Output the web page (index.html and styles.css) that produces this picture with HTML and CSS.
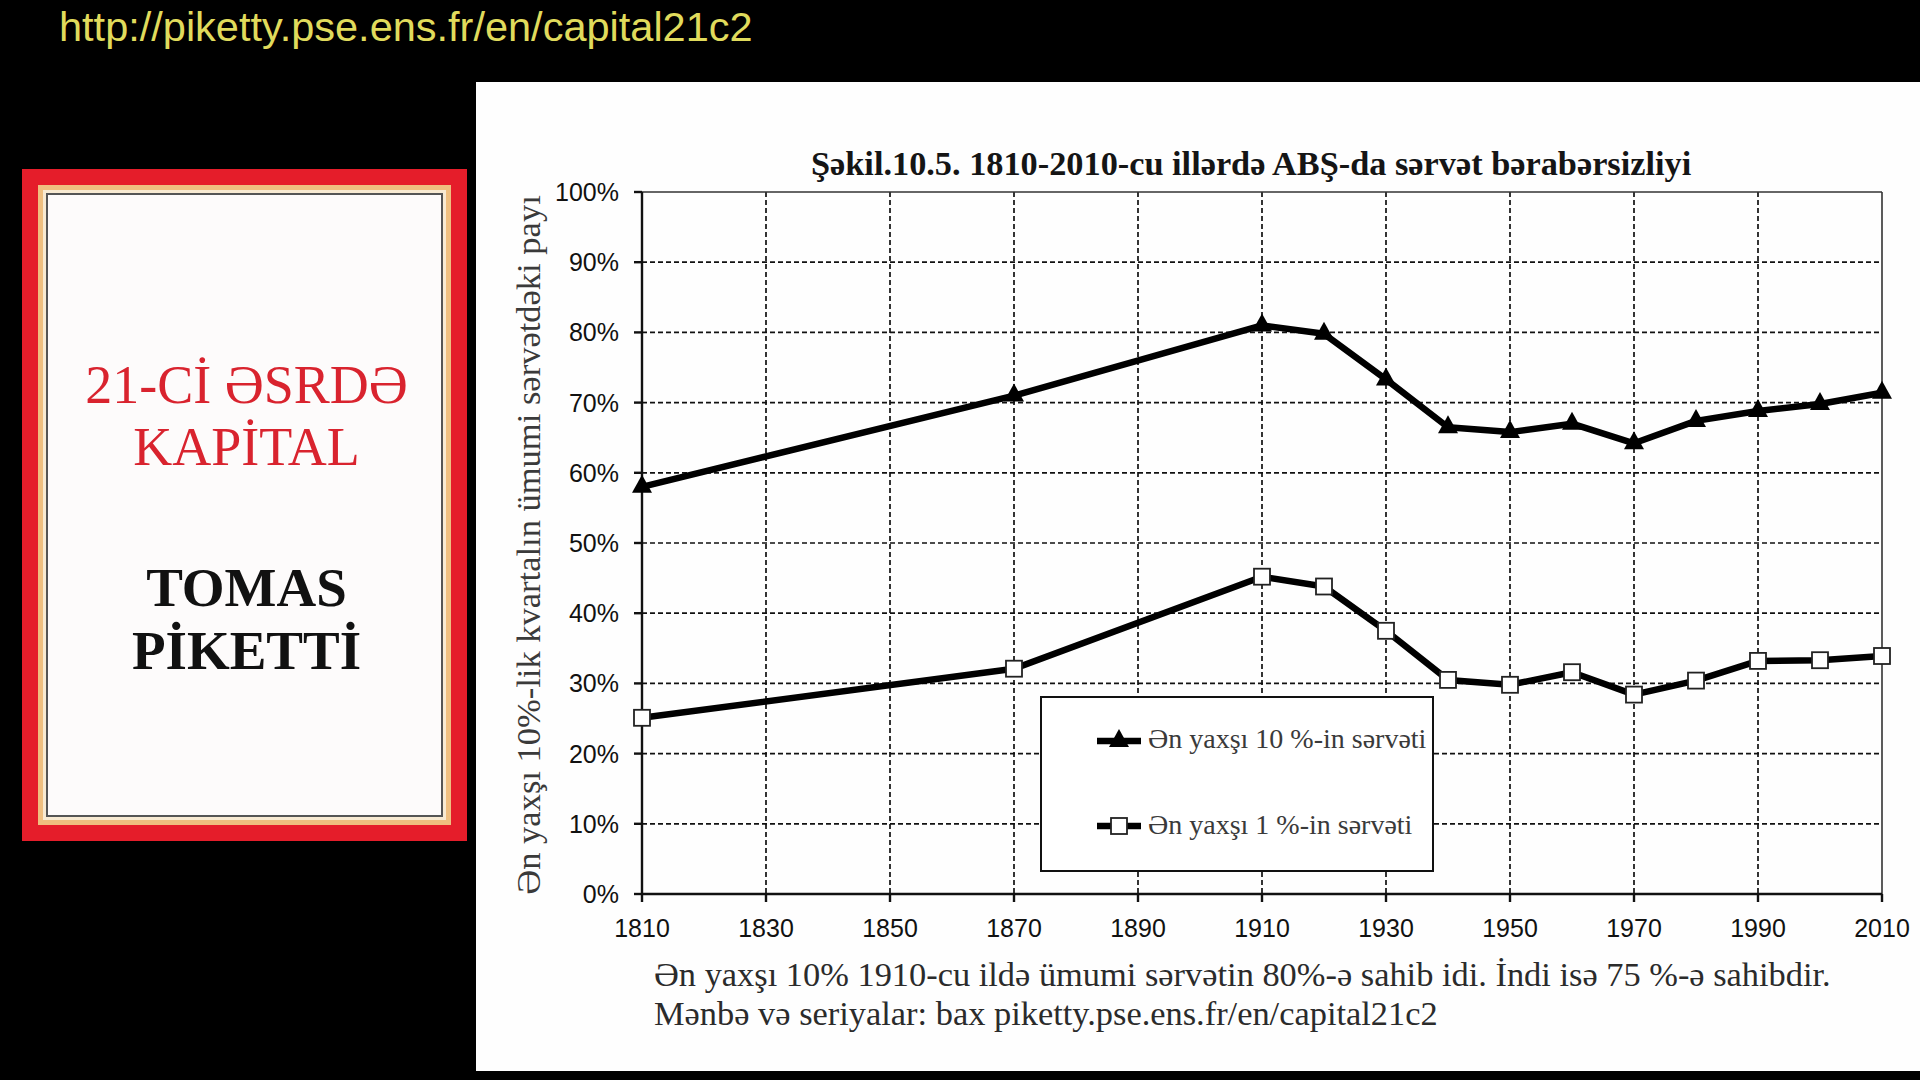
FILE: index.html
```html
<!DOCTYPE html>
<html lang="az">
<head>
<meta charset="utf-8">
<title>21-ci əsrdə kapital</title>
<link rel="stylesheet" href="styles.css">
</head>
<body>
<header class="url">http://piketty.pse.ens.fr/en/capital21c2</header>
<main class="stage">
  <div class="book">
    <div class="book-frame">
      <div class="book-inner">
        <div class="book-title">21-Cİ ƏSRDƏ<br>KAPİTAL</div>
        <div class="book-author">TOMAS<br>PİKETTİ</div>
      </div>
    </div>
  </div>
  <section class="panel">
    <h1 class="chart-title">Şəkil.10.5. 1810-2010-cu illərdə ABŞ-da sərvət bərabərsizliyi</h1>
    <svg class="chart" viewBox="476 178 1444 777" width="1444" height="777" xmlns="http://www.w3.org/2000/svg">
      <defs>
        <path id="tri" d="M0,-12 L10,6 L-10,6 Z"/>
        <rect id="sq" x="-8" y="-8" width="16" height="16"/>
      </defs>
      <g class="grid">
        <line x1="642" y1="823.8" x2="1882" y2="823.8"/>
        <line x1="642" y1="753.6" x2="1882" y2="753.6"/>
        <line x1="642" y1="683.4" x2="1882" y2="683.4"/>
        <line x1="642" y1="613.2" x2="1882" y2="613.2"/>
        <line x1="642" y1="543" x2="1882" y2="543"/>
        <line x1="642" y1="472.8" x2="1882" y2="472.8"/>
        <line x1="642" y1="402.6" x2="1882" y2="402.6"/>
        <line x1="642" y1="332.4" x2="1882" y2="332.4"/>
        <line x1="642" y1="262.2" x2="1882" y2="262.2"/>
        <line x1="766" y1="192" x2="766" y2="894"/>
        <line x1="890" y1="192" x2="890" y2="894"/>
        <line x1="1014" y1="192" x2="1014" y2="894"/>
        <line x1="1138" y1="192" x2="1138" y2="894"/>
        <line x1="1262" y1="192" x2="1262" y2="894"/>
        <line x1="1386" y1="192" x2="1386" y2="894"/>
        <line x1="1510" y1="192" x2="1510" y2="894"/>
        <line x1="1634" y1="192" x2="1634" y2="894"/>
        <line x1="1758" y1="192" x2="1758" y2="894"/>
      </g>
      <g class="frame">
        <line x1="642" y1="192" x2="1882" y2="192"/>
        <line x1="1882" y1="192" x2="1882" y2="894"/>
      </g>
      <g class="axis">
        <line x1="642" y1="192" x2="642" y2="894"/>
        <line x1="642" y1="894" x2="1882" y2="894"/>
        <line x1="634" y1="894" x2="642" y2="894"/>
        <line x1="634" y1="823.8" x2="642" y2="823.8"/>
        <line x1="634" y1="753.6" x2="642" y2="753.6"/>
        <line x1="634" y1="683.4" x2="642" y2="683.4"/>
        <line x1="634" y1="613.2" x2="642" y2="613.2"/>
        <line x1="634" y1="543" x2="642" y2="543"/>
        <line x1="634" y1="472.8" x2="642" y2="472.8"/>
        <line x1="634" y1="402.6" x2="642" y2="402.6"/>
        <line x1="634" y1="332.4" x2="642" y2="332.4"/>
        <line x1="634" y1="262.2" x2="642" y2="262.2"/>
        <line x1="634" y1="192" x2="642" y2="192"/>
        <line x1="642" y1="894" x2="642" y2="902"/>
        <line x1="766" y1="894" x2="766" y2="902"/>
        <line x1="890" y1="894" x2="890" y2="902"/>
        <line x1="1014" y1="894" x2="1014" y2="902"/>
        <line x1="1138" y1="894" x2="1138" y2="902"/>
        <line x1="1262" y1="894" x2="1262" y2="902"/>
        <line x1="1386" y1="894" x2="1386" y2="902"/>
        <line x1="1510" y1="894" x2="1510" y2="902"/>
        <line x1="1634" y1="894" x2="1634" y2="902"/>
        <line x1="1758" y1="894" x2="1758" y2="902"/>
        <line x1="1882" y1="894" x2="1882" y2="902"/>
      </g>
      <g class="ylabels">
        <text x="619" y="903">0%</text>
        <text x="619" y="832.8">10%</text>
        <text x="619" y="762.6">20%</text>
        <text x="619" y="692.4">30%</text>
        <text x="619" y="622.2">40%</text>
        <text x="619" y="552">50%</text>
        <text x="619" y="481.8">60%</text>
        <text x="619" y="411.6">70%</text>
        <text x="619" y="341.4">80%</text>
        <text x="619" y="271.2">90%</text>
        <text x="619" y="201">100%</text>
      </g>
      <g class="xlabels">
        <text x="642" y="937">1810</text>
        <text x="766" y="937">1830</text>
        <text x="890" y="937">1850</text>
        <text x="1014" y="937">1870</text>
        <text x="1138" y="937">1890</text>
        <text x="1262" y="937">1910</text>
        <text x="1386" y="937">1930</text>
        <text x="1510" y="937">1950</text>
        <text x="1634" y="937">1970</text>
        <text x="1758" y="937">1990</text>
        <text x="1882" y="937">2010</text>
      </g>
      <text class="ytitle" transform="translate(540 545) rotate(-90)">Ən yaxşı 10%-lik kvartalın ümumi sərvətdəki payı</text>
      <polyline class="series" points="642,486.8 1014,395.6 1262,325.4 1324,333.8 1386,379.4 1448,427.2 1510,432.1 1572,423.7 1634,443.3 1696,420.9 1758,411 1820,404 1882,392.8"/>
      <polyline class="series" points="642,717.8 1014,668.7 1262,576.7 1324,586.5 1386,630.8 1448,679.9 1510,684.8 1572,672.2 1634,694.6 1696,680.6 1758,660.9 1820,660.2 1882,656"/>
      <g class="tri">
        <use href="#tri" x="642" y="486.8"/>
        <use href="#tri" x="1014" y="395.6"/>
        <use href="#tri" x="1262" y="325.4"/>
        <use href="#tri" x="1324" y="333.8"/>
        <use href="#tri" x="1386" y="379.4"/>
        <use href="#tri" x="1448" y="427.2"/>
        <use href="#tri" x="1510" y="432.1"/>
        <use href="#tri" x="1572" y="423.7"/>
        <use href="#tri" x="1634" y="443.3"/>
        <use href="#tri" x="1696" y="420.9"/>
        <use href="#tri" x="1758" y="411"/>
        <use href="#tri" x="1820" y="404"/>
        <use href="#tri" x="1882" y="392.8"/>
      </g>
      <g class="sq">
        <use href="#sq" x="642" y="717.8"/>
        <use href="#sq" x="1014" y="668.7"/>
        <use href="#sq" x="1262" y="576.7"/>
        <use href="#sq" x="1324" y="586.5"/>
        <use href="#sq" x="1386" y="630.8"/>
        <use href="#sq" x="1448" y="679.9"/>
        <use href="#sq" x="1510" y="684.8"/>
        <use href="#sq" x="1572" y="672.2"/>
        <use href="#sq" x="1634" y="694.6"/>
        <use href="#sq" x="1696" y="680.6"/>
        <use href="#sq" x="1758" y="660.9"/>
        <use href="#sq" x="1820" y="660.2"/>
        <use href="#sq" x="1882" y="656"/>
      </g>
      <g class="legend">
        <rect class="legend-box" x="1041" y="697" width="392" height="174"/>
        <line class="series" x1="1097" y1="741" x2="1141" y2="741"/>
        <use class="tri" href="#tri" x="1119" y="741"/>
        <text class="legend-text" x="1148" y="748">Ən yaxşı 10 %-in sərvəti</text>
        <line class="series" x1="1097" y1="826" x2="1141" y2="826"/>
        <use class="sq" href="#sq" x="1119" y="826"/>
        <text class="legend-text" x="1148" y="834">Ən yaxşı 1 %-in sərvəti</text>
      </g>
    </svg>
    <p class="caption">Ən yaxşı 10% 1910-cu ildə ümumi sərvətin 80%-ə sahib idi. İndi isə 75 %-ə sahibdir.<br>Mənbə və seriyalar: bax piketty.pse.ens.fr/en/capital21c2</p>
  </section>
</main>
</body>
</html>
```

FILE: styles.css
```css
html, body {
  margin: 0;
  padding: 0;
}

body {
  background: #000;
  width: 1920px;
  height: 1080px;
  overflow: hidden;
}

.url {
  font-family: "Liberation Sans", Arial, sans-serif;
  font-size: 41.5px;
  line-height: 40px;
  color: #e0db5c;
  padding: 7px 0 0 59px;
}

.stage {
  display: flex;
  align-items: flex-start;
}

.book {
  margin: 122px 0 0 22px;
  width: 445px;
  height: 672px;
  box-sizing: border-box;
  padding: 16px;
  background: #e51d2a;
  flex: none;
}

.book-frame {
  height: 100%;
  box-sizing: border-box;
  border: 5px solid #efbf80;
  padding: 3px;
  background: #f8ead2;
}

.book-inner {
  height: 100%;
  box-sizing: border-box;
  border: 2px solid #555;
  background: #fdfbfb;
  text-align: center;
  padding: 159px 0 0 4px;
}

.book-title {
  font-family: "Liberation Serif", "Times New Roman", serif;
  font-size: 54px;
  line-height: 62px;
  color: #d9232e;
}

.book-author {
  margin-top: 78px;
  font-family: "Liberation Serif", "Times New Roman", serif;
  font-weight: bold;
  font-size: 55px;
  line-height: 63px;
  color: #111;
}

.panel {
  margin: 35px 0 0 9px;
  flex: 1;
  height: 989px;
  background: #fefefe;
}

.chart-title {
  margin: 0;
  padding: 66px 0 0 335px;
  font-family: "Liberation Serif", "Times New Roman", serif;
  font-weight: bold;
  font-size: 34.3px;
  line-height: 30px;
  color: #151515;
}

.chart {
  display: block;
  overflow: visible;
}

.grid line {
  stroke: #111;
  stroke-width: 1.7;
  stroke-dasharray: 5 3;
}

.frame line {
  stroke: #333;
  stroke-width: 1.6;
}

.axis line {
  stroke: #111;
  stroke-width: 2.4;
}

.ylabels text,
.xlabels text {
  font-family: "Liberation Sans", Arial, sans-serif;
  font-size: 25px;
  fill: #111;
}

.ylabels text {
  text-anchor: end;
}

.xlabels text {
  text-anchor: middle;
}

.ytitle {
  font-family: "Liberation Serif", "Times New Roman", serif;
  font-size: 34.5px;
  fill: #3a3a3a;
  text-anchor: middle;
}

.series {
  fill: none;
  stroke: #000;
  stroke-width: 6.5;
  stroke-linejoin: round;
}

.tri {
  fill: #000;
}

.sq {
  fill: #fff;
  stroke: #222;
  stroke-width: 1.8;
}

.legend-box {
  fill: #fff;
  stroke: #111;
  stroke-width: 2;
}

.legend-text {
  font-family: "Liberation Serif", "Times New Roman", serif;
  font-size: 28px;
  fill: #3a3a3a;
}

.caption {
  margin: 0 0 0 178px;
  font-family: "Liberation Serif", "Times New Roman", serif;
  font-size: 34.4px;
  line-height: 39px;
  color: #2b2b2b;
}
```
